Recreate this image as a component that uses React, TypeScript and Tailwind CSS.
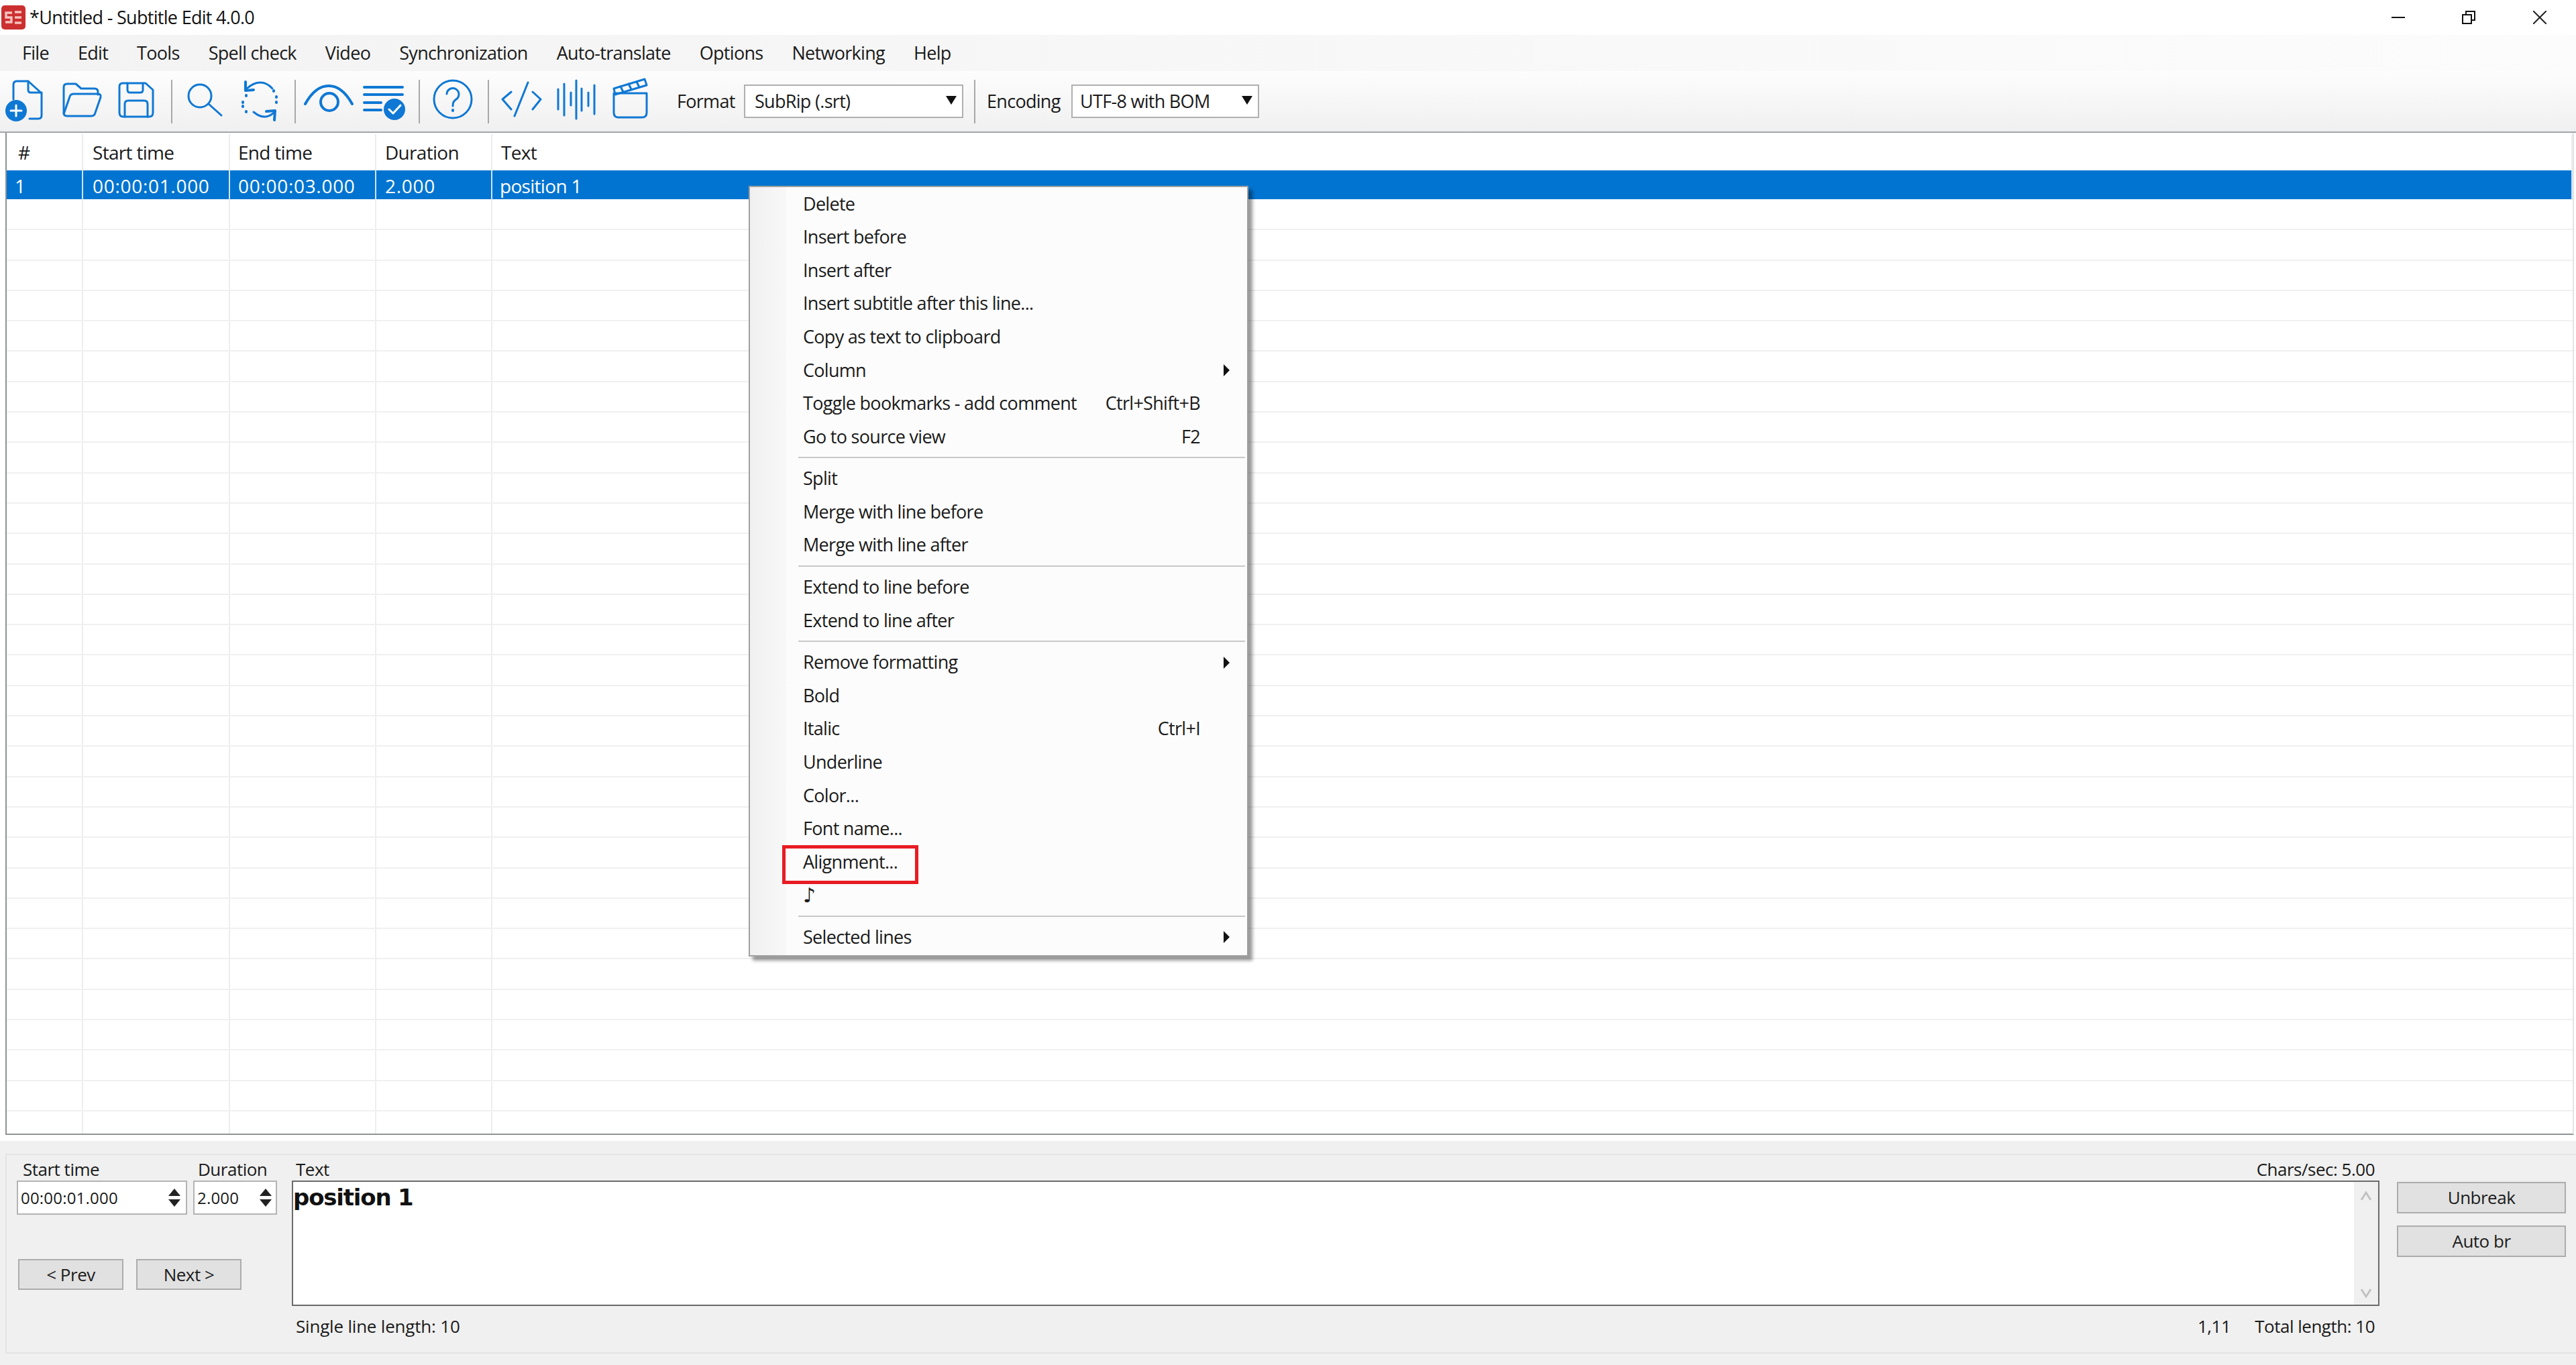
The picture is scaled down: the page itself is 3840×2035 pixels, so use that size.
import React from "react";

const BLUE = "#0f78d4";

type MenuRow =
  | { sep: true }
  | { label: string; shortcut?: string; sub?: boolean; sep?: false };

const contextMenu: MenuRow[] = [
  { label: "Delete" },
  { label: "Insert before" },
  { label: "Insert after" },
  { label: "Insert subtitle after this line..." },
  { label: "Copy as text to clipboard" },
  { label: "Column", sub: true },
  { label: "Toggle bookmarks - add comment", shortcut: "Ctrl+Shift+B" },
  { label: "Go to source view", shortcut: "F2" },
  { sep: true },
  { label: "Split" },
  { label: "Merge with line before" },
  { label: "Merge with line after" },
  { sep: true },
  { label: "Extend to line before" },
  { label: "Extend to line after" },
  { sep: true },
  { label: "Remove formatting", sub: true },
  { label: "Bold" },
  { label: "Italic", shortcut: "Ctrl+I" },
  { label: "Underline" },
  { label: "Color..." },
  { label: "Font name..." },
  { label: "Alignment..." },
  { label: "♪" },
  { sep: true },
  { label: "Selected lines", sub: true },
];

const menuBar = ["File", "Edit", "Tools", "Spell check", "Video", "Synchronization", "Auto-translate", "Options", "Networking", "Help"];

const Sep = ({ cls }: { cls: string }) => (
  <div className={`w-[2px] h-[65px] bg-[#a8a8a8] shrink-0 ${cls}`} />
);

// icons are drawn in page pixels, the viewBox is just a window on the toolbar
const ToolIcon = ({ x, w, cls, children }: { x: number; w: number; cls?: string; children: React.ReactNode }) => (
  <svg
    viewBox={`${x} 106 ${w} 90`}
    width={w}
    height={90}
    className={`shrink-0 ${cls ?? ""}`}
    fill="none"
    stroke={BLUE}
    strokeWidth={3}
    strokeLinecap="round"
    strokeLinejoin="round"
  >
    {children}
  </svg>
);

const Spinner = () => (
  <svg width="18" height="28" viewBox="0 0 18 28" className="shrink-0">
    <path d="M9 0 L18 11 L0 11 Z" fill="#222" />
    <path d="M0 16 L18 16 L9 27 Z" fill="#222" />
  </svg>
);

const DropArrow = () => (
  <svg width="16" height="13" viewBox="0 0 16 13" className="shrink-0 -mt-[4px]">
    <path d="M0 0 L16 0 L8 13 Z" fill="#111" />
  </svg>
);

const Btn = ({ label, cls }: { label: string; cls: string }) => (
  <div className={`flex items-center justify-center bg-[#e1e1e1] border-2 border-[#adadad] text-[26px] text-[#1c1c1c] ${cls}`}>
    {label}
  </div>
);

const columns = ["#", "Start time", "End time", "Duration", "Text"];
const first = ["1", "00:00:01.000", "00:00:03.000", "2.000", "position 1"];
const headPads = ["pl-[17px]", "pl-[14px]", "pl-[12px]", "pl-[13px]", "pl-[13px]"];
const rowPads = ["pl-[12px]", "pl-[14px]", "pl-[12px]", "pl-[13px]", "pl-[11px]"];
const rowTrack = ["", "tracking-[0.7px]", "tracking-[0.7px]", "tracking-[0.7px]", ""];
const rowGrid = "grid grid-cols-[114px_219px_218px_173px_1fr]";

export default function App() {
  return (
    <div className="relative w-[3840px] h-[2035px] overflow-hidden flex flex-col bg-white text-[#1a1a1a] font-['Open_Sans',sans-serif] text-[27px] tracking-[-0.7px]">
      {/* Title bar */}
      <div className="h-[52px] flex items-center shrink-0 bg-white">
        <svg width="36" height="36" viewBox="0 0 36 36" className="ml-[2px] shrink-0">
          <rect width="36" height="36" rx="5" fill="#cc2f2f" />
          <path d="M16 11 H7 V18 H15 V25 H6" fill="none" stroke="#f8c4c0" strokeWidth="3.4" />
          <path d="M30 10 H20 M30 18 H20 M30 26 H20" fill="none" stroke="#f8c4c0" strokeWidth="3.4" />
        </svg>
        <span className="ml-[6px] text-[#111]">*Untitled - Subtitle Edit 4.0.0</span>
        <div className="ml-auto flex items-center pr-[44px]">
          <svg width="20" height="20" viewBox="0 0 20 20" className="mr-[85px]">
            <path d="M0 10 H20" stroke="#111" strokeWidth="2" />
          </svg>
          <svg width="20" height="20" viewBox="0 0 20 20" className="mr-[86px]">
            <path d="M1 6 H14 V19 H1 Z M6 5 V1 H19 V14 H15" fill="none" stroke="#111" strokeWidth="2" />
          </svg>
          <svg width="20" height="20" viewBox="0 0 20 20">
            <path d="M0 0 L20 20 M20 0 L0 20" stroke="#222" strokeWidth="2" />
          </svg>
        </div>
      </div>

      {/* Menu bar */}
      <div className="h-[54px] flex items-center gap-[43px] pl-[33px] shrink-0 bg-[linear-gradient(90deg,#f3f3f3,#fcfcfc)]">
        {menuBar.map((m) => (
          <span key={m}>{m}</span>
        ))}
      </div>

      {/* Toolbar */}
      <div className="h-[92px] flex items-center shrink-0 border-b-2 border-[#a2a6a8] bg-[linear-gradient(180deg,#fdfdfd,#f0f0f0)]">
        <ToolIcon x={6} w={60} cls="ml-[6px]">
          <path d="M20 148 V126 Q20 121 25 121 H42 L62 139 V172 Q62 177 57 177 H44" />
          <path d="M42 121 V134 Q42 138 46 138 H62" />
          <circle cx="24" cy="165" r="16" fill={BLUE} stroke="none" />
          <path d="M24 157 V173 M16 165 H32" stroke="#fff" />
        </ToolIcon>
        <ToolIcon x={90} w={64} cls="ml-[24px]">
          <path d="M95 168 V130 Q95 125 100 125 H113 L121 132 H141 Q146 132 146 137 V141" />
          <path d="M95 170 L104 144 Q105 140 110 140 H146 Q151 140 150 145 L142 168 Q141 173 136 173 H100 Q95 173 95 168" />
        </ToolIcon>
        <ToolIcon x={175} w={56} cls="ml-[21px]">
          <path d="M183 124 H217 L228 134 V168 Q228 174 222 174 H184 Q178 174 178 168 V129 Q178 124 183 124 Z" />
          <path d="M190 124 V134 Q190 138 194 138 H209 Q213 138 213 134 V124" />
          <path d="M186 174 V155 Q186 150 191 150 H215 Q220 150 220 155 V174" />
        </ToolIcon>
        <Sep cls="ml-[24px]" />
        <ToolIcon x={278} w={56} cls="ml-[21px]">
          <circle cx="298" cy="143" r="17" />
          <path d="M311 155 L330 172" />
        </ToolIcon>
        <ToolIcon x={358} w={60} cls="ml-[24px]">
          <path d="M368 132 Q378 123 388 123 Q398 123 406 132" />
          <path d="M366 122 L366 135 L378 134" strokeWidth={4} />
          <path d="M378 167 Q388 175 396 174 Q404 173 410 166" />
          <path d="M409 179 L410 165 L397 166" strokeWidth={4} />
          <path d="M367 142 V143 M362 152 V153 M362 158 V159 M367 166 V167 M408 135 V136 M412 144 V145 M412 152 V153" strokeWidth={4} />
        </ToolIcon>
        <Sep cls="ml-[21px]" />
        <ToolIcon x={450} w={80} cls="ml-[9px]">
          <path d="M455 155 Q470 128 490 128 Q510 128 525 155" strokeWidth={4} />
          <circle cx="491" cy="152" r="13" strokeWidth={4} />
        </ToolIcon>
        <ToolIcon x={540} w={68} cls="ml-[10px]">
          <path d="M543 130 H600 M543 141 H600 M543 153 H568 M543 164 H568" strokeWidth={4} />
          <circle cx="588" cy="163" r="16" fill={BLUE} stroke="none" />
          <path d="M580 163 L586 169 L597 157" stroke="#fff" />
        </ToolIcon>
        <Sep cls="ml-[16px]" />
        <ToolIcon x={644} w={62} cls="ml-[18px]">
          <circle cx="675" cy="148" r="28" />
          <path d="M666 140 A9 9 0 1 1 680 148 C676 151 675 153 675 158" />
          <path d="M675 164 V165" strokeWidth={4} />
        </ToolIcon>
        <Sep cls="ml-[21px]" />
        <ToolIcon x={746} w={66} cls="ml-[16px]">
          <path d="M763 137 L750 148 L763 163 M788 123 L768 173 M795 137 L807 148 L795 163" />
        </ToolIcon>
        <ToolIcon x={828} w={64} cls="ml-[16px]">
          <path d="M833 133 V163 M842 125 V172 M852 138 V157 M860 120 V177 M868 132 V165 M878 138 V158 M887 127 V170" />
        </ToolIcon>
        <ToolIcon x={912} w={58} cls="ml-[20px]">
          <path d="M916 139 H965 V168 Q965 175 958 175 H923 Q916 175 916 168 Z" />
          <path d="M916 132 L962 118 L965 127 L918 141 Z" />
          <path d="M926 129 L930 137 M938 125 L942 133 M950 122 L954 130" />
        </ToolIcon>
        <span className="ml-[40px] w-[100px] shrink-0">Format</span>
        <div className="w-[327px] h-[50px] flex items-center justify-between border-2 border-[#b0b0b0] bg-white pl-[14px] pr-[8px] shrink-0">
          <span>SubRip (.srt)</span>
          <DropArrow />
        </div>
        <Sep cls="ml-[16px]" />
        <span className="ml-[17px] w-[126px] shrink-0">Encoding</span>
        <div className="w-[280px] h-[50px] flex items-center justify-between border-2 border-[#b0b0b0] bg-white pl-[11px] pr-[8px] shrink-0">
          <span>UTF-8 with BOM</span>
          <DropArrow />
        </div>
      </div>

      {/* Subtitle list */}
      <div className="h-[1503px] shrink-0 pl-[8px] pr-[3px] pb-[9px] bg-white">
        <div className="h-full flex flex-col overflow-hidden border-l-2 border-b-2 border-r-2 border-l-[#8f9394] border-b-[#8f9394] border-r-[#e4e4e4] bg-white text-[28px]">
          <div className={`${rowGrid} h-[56px] shrink-0 pt-[2px]`}>
            {columns.map((c, i) => (
              <div key={c} className={`flex items-center border-r-2 border-[#ececec] ${headPads[i]}`}>
                {c}
              </div>
            ))}
          </div>
          <div className={`${rowGrid} h-[44px] shrink-0 bg-[#0074d0] border-b border-white text-white`}>
            {first.map((c, i) => (
              <div key={c} className={`flex items-center pt-[2px] border-r-2 border-[#cfe4f6] ${rowPads[i]} ${rowTrack[i]}`}>
                {c}
              </div>
            ))}
          </div>
          {Array.from({ length: 31 }).map((_, r) => (
            <div key={r} className={`${rowGrid} h-[45.3px] shrink-0 border-b-2 border-[#f0f0f0]`}>
              <div className="border-r-2 border-[#eeeeee]" />
              <div className="border-r-2 border-[#eeeeee]" />
              <div className="border-r-2 border-[#eeeeee]" />
              <div className="border-r-2 border-[#eeeeee]" />
              <div />
            </div>
          ))}
        </div>
      </div>

      {/* Edit panel */}
      <div className="flex-1 bg-[#f0f0f0] pt-[19px] pl-[8px] text-[26px] tracking-[-0.5px]">
        <div className="h-[298px] flex border-t-2 border-l-2 border-b-2 border-[#e4e4e4] pt-[5px]">
          <div className="w-[425px] shrink-0 pl-[15px]">
            <div className="flex gap-[9px]">
              <div className="w-[254px]">
                <div className="h-[33px] pl-[9px] flex items-center">Start time</div>
                <div className="h-[51px] flex items-center justify-between border-2 border-[#b4b4b4] bg-white pl-[4px] pr-[8px] text-[24px] tracking-[0.2px]">
                  <span>00:00:01.000</span>
                  <Spinner />
                </div>
              </div>
              <div className="w-[125px]">
                <div className="h-[33px] pl-[7px] flex items-center">Duration</div>
                <div className="h-[51px] flex items-center justify-between border-2 border-[#b4b4b4] bg-white pl-[4px] pr-[6px] text-[24px] tracking-[0.2px]">
                  <span>2.000</span>
                  <Spinner />
                </div>
              </div>
            </div>
            <div className="flex gap-[19px] mt-[66px] pl-[2px]">
              <Btn label="< Prev" cls="w-[157px] h-[46px]" />
              <Btn label="Next >" cls="w-[157px] h-[46px]" />
            </div>
          </div>

          <div className="w-[3112px] shrink-0">
            <div className="h-[33px] flex items-center justify-between pl-[6px] pr-[7px]">
              <span>Text</span>
              <span>Chars/sec: 5.00</span>
            </div>
            <div className="h-[187px] flex border-2 border-[#6b6b6b] bg-white">
              <div className="flex-1 font-['DejaVu_Sans',sans-serif] font-bold text-[34px] leading-[46px] tracking-[-1.2px] text-[#111]">
                position 1
              </div>
              <div className="w-[36px] bg-[#f0f0f0] flex flex-col items-center justify-between pt-[14px] pb-[10px]">
                <svg width="16" height="14" viewBox="0 0 16 14">
                  <path d="M1 13 L8 2 L15 13" fill="none" stroke="#c2c2c2" strokeWidth="3" />
                </svg>
                <svg width="16" height="14" viewBox="0 0 16 14">
                  <path d="M1 1 L8 12 L15 1" fill="none" stroke="#c2c2c2" strokeWidth="3" />
                </svg>
              </div>
            </div>
            <div className="h-[30px] mt-[15px] flex items-center pl-[6px] pr-[7px]">
              <span className="tracking-[-0.2px]">Single line length: 10</span>
              <span className="ml-auto">1,11</span>
              <span className="ml-[36px]">Total length: 10</span>
            </div>
          </div>

          <div className="ml-[26px] w-[252px] shrink-0 pt-[35px] flex flex-col gap-[18px]">
            <Btn label="Unbreak" cls="h-[47px]" />
            <Btn label="Auto br" cls="h-[47px]" />
          </div>
        </div>
      </div>

      {/* Context menu */}
      <div className="absolute left-[1116px] top-[277px] w-[745px] h-[1149px] border-2 border-[#a0a0a0] shadow-[6px_6px_5px_rgba(0,0,0,0.4)] bg-[linear-gradient(90deg,#f0f0f0,#f8f8f8_54px,#fcfcfc_54px)]">
        {contextMenu.map((row, i) =>
          row.sep ? (
            <div key={i} className="h-[13px] flex items-center pl-[72px] pr-[3px]">
              <div className="w-full h-[2px] bg-[#c8c8c8]" />
            </div>
          ) : (
            <div
              key={i}
              className={`h-[49.6px] flex items-center pl-[79px] ${row.sub ? "pr-[26px]" : "pr-[70px]"}`}
            >
              <span className={row.label === "♪" ? "font-['DejaVu_Sans',sans-serif] text-[30px]" : ""}>{row.label}</span>
              {row.shortcut && <span className="ml-auto">{row.shortcut}</span>}
              {row.sub && (
                <svg width="9" height="18" viewBox="0 0 9 18" className="ml-auto">
                  <path d="M0 0 L9 9 L0 18 Z" fill="#111" />
                </svg>
              )}
            </div>
          )
        )}
        <div className="absolute left-[48px] top-[981px] w-[203px] h-[58px] border-[5px] border-[#e81c24]" />
      </div>
    </div>
  );
}
